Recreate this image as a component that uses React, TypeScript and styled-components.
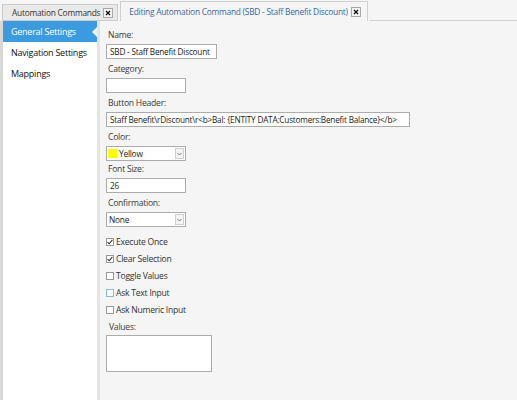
import styled, { createGlobalStyle } from 'styled-components';

const GlobalStyle = createGlobalStyle`
	html, body {
		margin: 0;
		padding: 0;
		background: #f5f5f5;
	}
	body {
		font-family: 'Open Sans', 'Noto Sans', sans-serif;
	}
	* {
		box-sizing: border-box;
	}
`;

const Window = styled.div`
	width: 517px;
	height: 400px;
	display: flex;
	flex-direction: column;
	background: #f5f5f5;
	overflow: hidden;
`;

const TabStrip = styled.div`
	height: 21px;
	flex: none;
	display: flex;
	align-items: flex-end;
	padding-left: 2px;
`;

const Tab = styled.div<{ $active?: boolean }>`
	display: flex;
	align-items: center;
	height: ${(p) => (p.$active ? '20px' : '17px')};
	padding: ${(p) => (p.$active ? '0 6px 0 8px' : '0 4px 0 9px')};
	margin-right: 2px;
	border: 1px solid ${(p) => (p.$active ? '#d0d0d0' : '#cbcbcb')};
	border-bottom: ${(p) => (p.$active ? 'none' : '1px solid #cbcbcb')};
	background: ${(p) => (p.$active ? '#f5f5f5' : '#e9e9e9')};
	color: ${(p) => (p.$active ? '#3b68a6' : '#333')};
	font-size: 8.4px;
	letter-spacing: -0.25px;
	white-space: nowrap;
	> span {
		margin-right: 3px;
		padding-bottom: ${(p) => (p.$active ? '1px' : '0')};
	}
`;

const TabFiller = styled.div`
	flex: 1;
	height: 1px;
	background: #d2d2d2;
`;

const CloseBox = styled.div`
	width: 10px;
	height: 10px;
	border: 1px solid #a8a8a8;
	background: #f2f2f2;
	display: flex;
	align-items: center;
	justify-content: center;
`;

const Body = styled.div`
	flex: 1;
	display: flex;
	min-height: 0;
`;

const Sidebar = styled.ul`
	list-style: none;
	margin: 0;
	padding: 0;
	width: 100px;
	flex: none;
	background: #fff;
	border-left: 3px solid #d8d8d8;
	border-right: 3px solid #e4e4e4;
`;

const NavItem = styled.li<{ $selected?: boolean }>`
	position: relative;
	height: 21px;
	line-height: 21px;
	padding-left: 8px;
	font-size: 9px;
	letter-spacing: -0.25px;
	color: ${(p) => (p.$selected ? '#fff' : '#111')};
	background: ${(p) => (p.$selected ? '#3c9ade' : 'transparent')};
	&::after {
		content: '';
		display: ${(p) => (p.$selected ? 'block' : 'none')};
		position: absolute;
		right: 0;
		top: 6px;
		border-style: solid;
		border-width: 5px 5px 5px 0;
		border-color: transparent #f5f5f5 transparent transparent;
	}
`;

const Content = styled.div`
	flex: 1;
	padding: 6px 0 0 6px;
	display: flex;
	flex-direction: column;
	align-items: flex-start;
	letter-spacing: -0.25px;
`;

const Field = styled.div<{ $after: number }>`
	display: flex;
	flex-direction: column;
	align-items: flex-start;
	margin-bottom: ${(p) => p.$after}px;
`;

const Label = styled.div<{ $flush?: boolean }>`
	height: 16px;
	line-height: 16px;
	padding-left: ${(p) => (p.$flush ? '3px' : '2px')};
	margin-bottom: ${(p) => (p.$flush ? '0' : '1px')};
	font-size: 8.6px;
	color: #3a3a3a;
`;

const TextInput = styled.input<{ $width: number }>`
	width: ${(p) => p.$width}px;
	height: 15px;
	margin: 0;
	padding: 0 2px 0 3px;
	border: 1px solid #acacac;
	background: #fff;
	font-family: inherit;
	font-size: 8.2px;
	letter-spacing: -0.2px;
	color: #222;
	outline: none;
`;

const SelectBox = styled.div`
	width: 80px;
	height: 15px;
	border: 1px solid #acacac;
	background: #fff;
	display: flex;
	align-items: center;
	padding-left: 1px;
	font-size: 8.4px;
	color: #222;
	> span {
		flex: 1;
		padding-left: 1px;
	}
`;

const Swatch = styled.i<{ $color: string }>`
	width: 9px;
	height: 9px;
	background: ${(p) => p.$color};
	margin-right: 1px;
`;

const ArrowBox = styled.div`
	width: 9px;
	height: 11px;
	margin-right: 1px;
	border: 1px solid #cfcfcf;
	background: #f4f4f4;
	display: flex;
	align-items: center;
	justify-content: center;
`;

const CheckList = styled.div`
	margin-top: 7px;
	display: flex;
	flex-direction: column;
`;

const CheckRow = styled.label`
	height: 17px;
	display: flex;
	align-items: center;
	font-size: 8.6px;
	color: #333;
	margin-top: -1px;
	margin-bottom: 1px;
`;

const CheckBox = styled.span<{ $hover?: boolean }>`
	width: 8px;
	height: 8px;
	margin-right: 2px;
	border: 1px solid ${(p) => (p.$hover ? '#8bb7e6' : '#999')};
	background: #fff;
	display: flex;
	align-items: center;
	justify-content: center;
`;

const TextArea = styled.textarea`
	width: 106px;
	height: 37px;
	margin: 0;
	border: 1px solid #acacac;
	background: #fff;
	resize: none;
	outline: none;
`;

const CloseIcon = () => (
	<svg width="6" height="6" viewBox="0 0 6 6">
		<path d="M1 1L5 5M5 1L1 5" stroke="#111" strokeWidth="1.3" />
	</svg>
);

const Chevron = () => (
	<svg width="5" height="4" viewBox="0 0 5 4">
		<path d="M0.5 1L2.5 3L4.5 1" stroke="#777" strokeWidth="1" fill="none" />
	</svg>
);

const Tick = () => (
	<svg width="6" height="6" viewBox="0 0 6 6">
		<path d="M0.6 3.2L2.2 4.8L5.4 0.9" stroke="#333" strokeWidth="1.1" fill="none" />
	</svg>
);

const checks = [
	{ label: 'Execute Once', checked: true },
	{ label: 'Clear Selection', checked: true },
	{ label: 'Toggle Values', checked: false },
	{ label: 'Ask Text Input', checked: false, hover: true },
	{ label: 'Ask Numeric Input', checked: false },
];

export default function App() {
	return (
		<>
			<GlobalStyle />
			<Window>
				<TabStrip>
					<Tab>
						<span>Automation Commands</span>
						<CloseBox>
							<CloseIcon />
						</CloseBox>
					</Tab>
					<Tab $active>
						<span>Editing Automation Command (SBD - Staff Benefit Discount)</span>
						<CloseBox>
							<CloseIcon />
						</CloseBox>
					</Tab>
					<TabFiller />
				</TabStrip>
				<Body>
					<Sidebar>
						<NavItem $selected>General Settings</NavItem>
						<NavItem>Navigation Settings</NavItem>
						<NavItem>Mappings</NavItem>
					</Sidebar>
					<Content>
						<Field $after={2}>
							<Label>Name:</Label>
							<TextInput $width={111} readOnly value="SBD - Staff Benefit Discount" />
						</Field>
						<Field $after={2}>
							<Label>Category:</Label>
							<TextInput $width={80} readOnly value="" />
						</Field>
						<Field $after={2}>
							<Label>Button Header:</Label>
							<TextInput
								$width={304}
								readOnly
								value={'Staff Benefit\\rDiscount\\r<b>Bal: {ENTITY DATA:Customers:Benefit Balance}</b>'}
							/>
						</Field>
						<Field $after={0}>
							<Label>Color:</Label>
							<SelectBox>
								<Swatch $color="#ffff00" />
								<span>Yellow</span>
								<ArrowBox>
									<Chevron />
								</ArrowBox>
							</SelectBox>
						</Field>
						<Field $after={2}>
							<Label>Font Size:</Label>
							<TextInput $width={80} readOnly value="26" />
						</Field>
						<Field $after={0}>
							<Label>Confirmation:</Label>
							<SelectBox>
								<span>None</span>
								<ArrowBox>
									<Chevron />
								</ArrowBox>
							</SelectBox>
						</Field>
						<CheckList>
							{checks.map((c) => (
								<CheckRow key={c.label}>
									<CheckBox $hover={c.hover}>{c.checked && <Tick />}</CheckBox>
									{c.label}
								</CheckRow>
							))}
						</CheckList>
						<Field $after={0}>
							<Label $flush>Values:</Label>
							<TextArea readOnly />
						</Field>
					</Content>
				</Body>
			</Window>
		</>
	);
}
